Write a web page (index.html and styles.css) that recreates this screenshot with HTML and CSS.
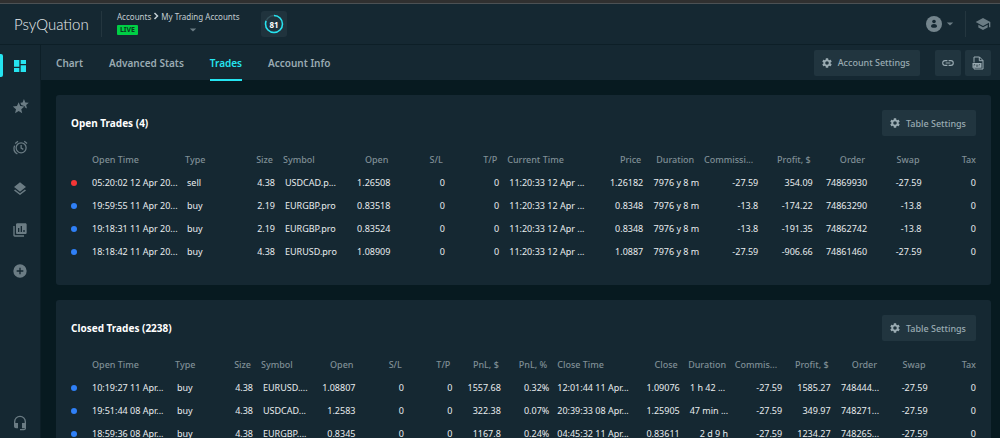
FILE: index.html
```html
<!DOCTYPE html>
<html lang="en">
<head>
    <meta charset="UTF-8">
    <meta name="viewport" content="width=device-width, initial-scale=1.0">
    <title>PsyQuation - Trades</title>
    <link rel="stylesheet" href="styles.css">
</head>
<body>
    <!-- shared icons -->
    <svg class="sprite" aria-hidden="true">
        <symbol id="gear" viewBox="0 0 24 24">
            <path d="M19.14 12.94c.04-.3.06-.61.06-.94 0-.32-.02-.64-.07-.94l2.03-1.58a.49.49 0 0 0 .12-.61l-1.92-3.32a.49.49 0 0 0-.59-.22l-2.39.96c-.5-.38-1.03-.7-1.62-.94l-.36-2.54A.48.48 0 0 0 13.920 2.400h-3.840c-.24 0-.43.17-.47.41l-.36 2.54c-.59.24-1.13.57-1.62.94l-2.390-.96c-.22-.08-.47 0-.59.22L2.740 8.870c-.12.21-.08.47.12.61l2.030 1.580c-.05.3-.09.63-.09.94s.02.64.07.94l-2.030 1.580a.49.49 0 0 0-.12.61l1.920 3.320c.12.22.37.29.59.22l2.390-.96c.5.38 1.030.7 1.620.94l.36 2.540c.05.24.24.41.48.41h3.840c.24 0 .44-.17.47-.41l.36-2.540c.59-.24 1.130-.56 1.620-.94l2.390.96c.22.08.47 0 .59-.22l1.920-3.320c.12-.22.07-.47-.12-.61l-2.010-1.580zM12 15.600A3.600 3.600 0 1 1 12 8.400a3.600 3.600 0 0 1 0 7.200z"/>
        </symbol>
        <symbol id="caret" viewBox="0 0 10 10">
            <path d="M1 3h8L5 7z"/>
        </symbol>
    </svg>

    <div class="topline"></div>

    <header class="header">
        <a href="#" class="logo">PsyQuation</a>
        <div class="account">
            <nav class="breadcrumb" aria-label="Breadcrumb">
                <a href="#">Accounts</a>
                <svg viewBox="0 0 8 10" class="chevron"><path d="M2 1l4 4-4 4"/></svg>
                <a href="#">My Trading Accounts</a>
            </nav>
            <div class="account-row">
                <span class="badge">LIVE</span>
                <button class="account-select" aria-label="Select account"><svg class="caret"><use href="#caret"/></svg></button>
            </div>
        </div>
        <div class="score">
            <svg viewBox="0 0 20 20">
                <circle cx="10" cy="10" r="8.500" class="ring"/>
                <circle cx="10" cy="10" r="8.500" class="ring-value" pathLength="100" stroke-dasharray="81 100" transform="rotate(-90 10 10)"/>
            </svg>
            <span>81</span>
        </div>
        <button class="user" aria-label="Profile">
            <svg viewBox="0 0 16 16" class="avatar"><circle cx="8" cy="8" r="8"/><circle cx="8" cy="5.500" r="1.800" class="hole"/><path d="M5 10.500c0-3.200 6-3.200 6 0 0 1.800-6 1.800-6 0z" class="hole"/></svg>
            <svg class="caret"><use href="#caret"/></svg>
        </button>
        <a href="#" class="academy" aria-label="Academy">
            <svg viewBox="0 0 24 24"><path d="M5 13.180v4L12 21l7-3.820v-4L12 17l-7-3.820zM12 3L1 9l11 6 9-4.910V17h2V9L12 3z"/></svg>
        </a>
    </header>

    <div class="app">
        <nav class="sidebar" aria-label="Main">
            <a href="#" class="active" aria-label="Dashboard"><svg viewBox="0 0 24 24"><path d="M3 13h8V3H3v10zm0 8h8v-6H3v6zm10 0h8V11h-8v10zm0-18v6h8V3h-8z"/></svg></a>
            <a href="#" aria-label="Ratings"><svg viewBox="0 0 24 24" class="wide"><path d="M9 5l2.600 6.200 6.700.600-5.100 4.400 1.500 6.600L9 19.300l-5.700 3.500 1.500-6.600L-.300 11.800l6.700-.600z"/><path d="M13.300 9.400l-1.500-3.600 3.500-.300L17.500 0l2.200 5.500 5.600.400-4.300 3.700 1.300 5.700-3.600-2.200.3-1.500-3.300-1.400z"/></svg></a>
            <a href="#" aria-label="Alerts"><svg viewBox="0 0 24 24" class="wide line"><circle cx="13" cy="12.500" r="8"/><path d="M13 8v5l3.500 2M3.500 5.500L8 2M18 2l4.500 3.500M2.500 9c-2 5-.5 10.500 4.500 13.500"/></svg></a>
            <a href="#" aria-label="Layers"><svg viewBox="0 0 24 24"><path d="M11.990 18.540l-7.370-5.730L3 14.070l9 7 9-7-1.630-1.270-7.380 5.740zM12 16l7.360-5.730L21 9l-9-7-9 7 1.630 1.270L12 16z"/></svg></a>
            <a href="#" aria-label="Reports"><svg viewBox="0 0 24 24"><path d="M4 6H2v14c0 1.100.9 2 2 2h14v-2H4V6z"/><path fill-rule="evenodd" d="M20 2H8c-1.100 0-2 .9-2 2v12c0 1.100.9 2 2 2h12c1.100 0 2-.9 2-2V4c0-1.100-.9-2-2-2zM9 9h2v6H9zM13 6h2v9h-2zM17 12h2v3h-2z"/></svg></a>
            <a href="#" aria-label="Add"><svg viewBox="0 0 24 24"><path d="M12 2a10 10 0 1 0 0 20 10 10 0 0 0 0-20zm5 11h-4v4h-2v-4H7v-2h4V7h2v4h4v2z"/></svg></a>
            <a href="#" class="support" aria-label="Support"><svg viewBox="0 0 24 24"><path d="M12 1a9 9 0 0 0-9 9v7c0 1.660 1.340 3 3 3h3v-8H5v-2a7 7 0 0 1 14 0v2h-4v8h4v1h-7v2h6c1.660 0 3-1.340 3-3V10a9 9 0 0 0-9-9z"/></svg></a>
        </nav>

        <div class="content">
            <div class="subheader">
                <nav class="tabs" aria-label="Account">
                    <a href="#">Chart</a>
                    <a href="#">Advanced Stats</a>
                    <a href="#" class="active">Trades</a>
                    <a href="#">Account Info</a>
                </nav>
                <button class="btn account-settings"><svg><use href="#gear"/></svg>Account Settings</button>
                <button class="btn icon-btn" aria-label="Copy link"><svg viewBox="0 0 24 24" class="link"><path d="M3.900 12c0-1.710 1.390-3.100 3.100-3.100h4V7H7a5 5 0 0 0 0 10h4v-1.900H7c-1.710 0-3.100-1.390-3.100-3.100zM8 13h8v-2H8v2zm9-6h-4v1.900h4a3.100 3.100 0 0 1 0 6.200h-4V17h4a5 5 0 0 0 0-10z"/></svg></button>
                <button class="btn icon-btn" aria-label="Export file"><svg viewBox="0 0 14 14" class="file"><path class="sheet" d="M3 6.500V1h5.500L12 4.500V13H3v-1M8.300 1v3.700H12"/><path d="M1.500 7h9v4.800h-9z"/><path class="marks" d="M3 10.500v-2h1v1M5.500 8.500v2h1v-2M8 10.500v-2h1"/></svg></button>
            </div>

            <main class="panels">
                <section class="card">
                    <div class="card-head">
                        <h2>Open Trades (4)</h2>
                        <button class="btn"><svg><use href="#gear"/></svg>Table Settings</button>
                    </div>
                    <table class="open-trades">
                        <colgroup>
                            <col class="c-dot"><col class="c-time"><col class="c-type"><col class="c-size"><col class="c-symbol"><col><col><col><col class="c-time2"><col class="c-price"><col class="c-price"><col class="c-comm"><col><col><col><col>
                        </colgroup>
                        <thead>
                            <tr><th></th><th class="text">Open Time</th><th class="text">Type</th><th>Size</th><th class="text">Symbol</th><th>Open</th><th>S/L</th><th>T/P</th><th class="text">Current Time</th><th>Price</th><th class="inset">Duration</th><th class="inset">Commissi...</th><th>Profit, $</th><th>Order</th><th>Swap</th><th>Tax</th></tr>
                        </thead>
                        <tbody>
                            <tr><td><i class="dot sell"></i></td><td class="text first">05:20:02 12 Apr 20...</td><td class="text">sell</td><td>4.38</td><td class="text">USDCAD.p...</td><td>1.26508</td><td>0</td><td>0</td><td class="text">11:20:33 12 Apr ...</td><td>1.26182</td><td>7976 y 8 m</td><td>-27.59</td><td>354.09</td><td>74869930</td><td>-27.59</td><td>0</td></tr>
                            <tr><td><i class="dot"></i></td><td class="text first">19:59:55 11 Apr 20...</td><td class="text">buy</td><td>2.19</td><td class="text">EURGBP.pro</td><td>0.83518</td><td>0</td><td>0</td><td class="text">11:20:33 12 Apr ...</td><td>0.8348</td><td>7976 y 8 m</td><td>-13.8</td><td>-174.22</td><td>74863290</td><td>-13.8</td><td>0</td></tr>
                            <tr><td><i class="dot"></i></td><td class="text first">19:18:31 11 Apr 20...</td><td class="text">buy</td><td>2.19</td><td class="text">EURGBP.pro</td><td>0.83524</td><td>0</td><td>0</td><td class="text">11:20:33 12 Apr ...</td><td>0.8348</td><td>7976 y 8 m</td><td>-13.8</td><td>-191.35</td><td>74862742</td><td>-13.8</td><td>0</td></tr>
                            <tr><td><i class="dot"></i></td><td class="text first">18:18:42 11 Apr 20...</td><td class="text">buy</td><td>4.38</td><td class="text">EURUSD.pro</td><td>1.08909</td><td>0</td><td>0</td><td class="text">11:20:33 12 Apr ...</td><td>1.0887</td><td>7976 y 8 m</td><td>-27.59</td><td>-906.66</td><td>74861460</td><td>-27.59</td><td>0</td></tr>
                        </tbody>
                    </table>
                </section>

                <section class="card">
                    <div class="card-head">
                        <h2>Closed Trades (2238)</h2>
                        <button class="btn"><svg><use href="#gear"/></svg>Table Settings</button>
                    </div>
                    <table class="closed-trades">
                        <colgroup>
                            <col class="c-dot"><col class="c-time"><col class="c-type"><col class="c-size"><col class="c-symbol"><col><col><col><col><col><col class="c-time2"><col><col><col class="c-comm"><col><col><col><col>
                        </colgroup>
                        <thead>
                            <tr><th></th><th class="text">Open Time</th><th class="text">Type</th><th>Size</th><th class="text">Symbol</th><th>Open</th><th>S/L</th><th>T/P</th><th>PnL, $</th><th>PnL, %</th><th class="text">Close Time</th><th>Close</th><th>Duration</th><th class="inset">Commis...</th><th>Profit, $</th><th>Order</th><th>Swap</th><th>Tax</th></tr>
                        </thead>
                        <tbody>
                            <tr><td><i class="dot"></i></td><td class="text first">10:19:27 11 Apr...</td><td class="text">buy</td><td>4.38</td><td class="text">EURUSD....</td><td>1.08807</td><td>0</td><td>0</td><td>1557.68</td><td>0.32%</td><td class="text first">12:01:44 11 Apr...</td><td>1.09076</td><td class="cut">1 h 42 ...</td><td>-27.59</td><td>1585.27</td><td>748444...</td><td>-27.59</td><td>0</td></tr>
                            <tr><td><i class="dot"></i></td><td class="text first">19:51:44 08 Apr...</td><td class="text">buy</td><td>4.38</td><td class="text">USDCAD...</td><td>1.2583</td><td>0</td><td>0</td><td>322.38</td><td>0.07%</td><td class="text first">20:39:33 08 Apr...</td><td>1.25905</td><td>47 min ...</td><td>-27.59</td><td>349.97</td><td>748271...</td><td>-27.59</td><td>0</td></tr>
                            <tr><td><i class="dot"></i></td><td class="text first">18:59:36 08 Apr...</td><td class="text">buy</td><td>4.38</td><td class="text">EURGBP....</td><td>0.8345</td><td>0</td><td>0</td><td>1167.8</td><td>0.24%</td><td class="text first">04:45:32 11 Apr...</td><td>0.83611</td><td>2 d 9 h</td><td>-27.59</td><td>1234.27</td><td>748265...</td><td>-27.59</td><td>0</td></tr>
                        </tbody>
                    </table>
                </section>
            </main>
        </div>
    </div>
</body>
</html>
```

FILE: styles.css
```css
:root {
    --panel: #152832;
    --back: #071a20;
    --button: #21353f;
    --line: #0d1f27;
    --accent: #25e4f0;
    --muted: #6b7c84;
    --soft: #9aabb2;
}

* {
    box-sizing: border-box;
}

body {
    display: flex;
    flex-direction: column;
    height: 100vh;
    margin: 0;
    overflow: hidden;
    background: var(--back);
    color: #e8ecee;
    font-family: "Noto Sans", sans-serif;
    font-size: 9px;
}

a {
    color: inherit;
    text-decoration: none;
}

button {
    border: 0;
    padding: 0;
    background: none;
    color: inherit;
    font: inherit;
    cursor: pointer;
}

svg {
    display: block;
    fill: currentColor;
}

.sprite {
    display: none;
}

.topline {
    flex: none;
    height: 4px;
    background: #303030;
    border-bottom: 1px solid #4c5154;
}

/* header */
.header {
    display: flex;
    flex: none;
    align-items: center;
    height: 41px;
    padding-left: 14px;
    background: var(--panel);
    border-bottom: 1px solid var(--line);
}

.logo {
    width: 87px;
    color: #e8edef;
    font-family: Lato, "Noto Sans", sans-serif;
    font-size: 15px;
    font-weight: 300;
}

.account {
    width: 160px;
    height: 26px;
    padding-left: 15px;
    border-left: 1px solid #24363f;
}

.breadcrumb {
    display: flex;
    align-items: center;
    height: 10px;
    gap: 2px;
    color: #c3cdd1;
    font-size: 8px;
    white-space: nowrap;
}

.chevron {
    width: 6px;
    height: 8px;
    fill: none;
    stroke: currentColor;
    stroke-width: 2;
}

.account-row {
    display: flex;
    justify-content: space-between;
    width: 80px;
    margin-top: 4px;
}

.badge {
    width: 21px;
    height: 10px;
    border-radius: 1px;
    background: #00cf45;
    color: #0b3a22;
    font-size: 7px;
    font-weight: 700;
    line-height: 10px;
    text-align: center;
}

.caret {
    width: 8px;
    height: 8px;
    color: var(--muted);
}

.score {
    display: grid;
    place-items: center;
    width: 26px;
    height: 26px;
    border-radius: 3px;
    background: #20333d;
    color: #fff;
    font-size: 8px;
    font-weight: 700;
}

.score svg,
.score span {
    grid-area: 1 / 1;
}

.score svg {
    width: 20px;
    height: 20px;
    fill: none;
    stroke-width: 1.5;
}

.ring {
    stroke: #35505a;
}

.ring-value {
    stroke: var(--accent);
}

.user {
    display: flex;
    align-items: center;
    gap: 4px;
    height: 26px;
    margin-left: auto;
    padding-right: 11px;
    border-right: 1px solid #24363f;
    color: #74858d;
}

.avatar {
    width: 16px;
    height: 16px;
}

.hole {
    fill: var(--panel);
}

.academy {
    padding: 0 9px;
    color: var(--muted);
}

.academy svg {
    width: 16px;
    height: 16px;
}

/* layout */
.app {
    display: flex;
    flex: 1;
    min-height: 0;
}

.sidebar {
    display: flex;
    flex: none;
    flex-direction: column;
    width: 41px;
    background: var(--panel);
    border-right: 1px solid var(--line);
    color: var(--muted);
}

.sidebar a {
    display: flex;
    align-items: center;
    justify-content: center;
    height: 41px;
}

.sidebar svg {
    width: 16px;
    height: 16px;
    overflow: visible;
}

.sidebar .wide {
    width: 15px;
    height: 15px;
}

.sidebar .line {
    fill: none;
    stroke: currentColor;
    stroke-width: 2;
}

.sidebar .active {
    color: var(--accent);
}

.sidebar .active::before {
    content: "";
    width: 3px;
    height: 23px;
    margin-right: auto;
    border-radius: 0 2px 2px 0;
    background: var(--accent);
}

.sidebar .active svg {
    margin-right: 12px;
}

.sidebar .support {
    margin-top: auto;
    height: 30px;
}

.content {
    display: flex;
    flex: 1;
    flex-direction: column;
    min-width: 0;
}

.subheader {
    display: flex;
    flex: none;
    align-items: center;
    height: 35px;
    padding: 0 9px 0 15px;
    background: var(--panel);
}

.tabs {
    display: flex;
    gap: 26px;
    margin-right: auto;
    color: var(--soft);
    font-size: 10px;
    font-weight: 600;
    line-height: 36px;
}

.tabs .active {
    color: var(--accent);
    box-shadow: inset 0 -2px var(--accent);
}

.btn {
    display: flex;
    align-items: center;
    height: 26px;
    gap: 5px;
    padding: 0 10px 0 7px;
    border-radius: 2px;
    background: var(--button);
    color: var(--soft);
    font-weight: 500;
}

.btn svg {
    width: 12px;
    height: 12px;
}

.account-settings {
    margin-right: 15px;
}

.icon-btn {
    justify-content: center;
    width: 26px;
    padding: 0;
}

.icon-btn + .icon-btn {
    margin-left: 4px;
}

.btn .link,
.btn .file {
    width: 14px;
    height: 14px;
}

.file .sheet,
.file .marks {
    fill: none;
    stroke: currentColor;
}

.file .marks {
    stroke: var(--button);
    stroke-width: 0.5;
}

/* trade tables */
.panels {
    flex: 1;
    min-height: 0;
    padding: 15px 9px 0 15px;
    overflow: hidden;
}

.card {
    margin-bottom: 15px;
    padding: 15px 15px 22px;
    border-radius: 3px;
    background: var(--panel);
}

.card-head {
    display: flex;
    align-items: center;
    justify-content: space-between;
    margin-bottom: 12px;
}

h2 {
    margin: 0;
    color: #fff;
    font-size: 10px;
    font-weight: 700;
}

table {
    width: 100%;
    border-collapse: collapse;
    table-layout: fixed;
}

th,
td {
    height: 23px;
    padding: 0;
    text-align: right;
    white-space: nowrap;
}

th {
    padding-right: 2px;
    color: #7f8e95;
    font-weight: 500;
}

th:last-child {
    padding-right: 0;
}

th.inset {
    padding-right: 5px;
}

th.text {
    padding-left: 8px;
    text-align: left;
}

td.text {
    padding-left: 10px;
    text-align: left;
}

td.first {
    padding-left: 8px;
}

td.cut {
    padding-right: 3px;
}

.dot {
    display: block;
    width: 6px;
    height: 6px;
    border-radius: 50%;
    background: #2f80f7;
}

.dot.sell {
    background: #f53636;
}

.c-dot {
    width: 13px;
}

.open-trades .c-time {
    width: 93px;
}

.open-trades .c-type {
    width: 53px;
}

.open-trades .c-size {
    width: 45px;
}

.open-trades .c-symbol {
    width: 61px;
}

.open-trades .c-time2 {
    width: 88px;
}

.open-trades .c-price {
    width: 56px;
}

.open-trades .c-comm {
    width: 59px;
}

.closed-trades .c-time {
    width: 83px;
}

.closed-trades .c-type {
    width: 48px;
}

.closed-trades .c-size {
    width: 38px;
}

.closed-trades .c-symbol {
    width: 54px;
}

.closed-trades .c-time2 {
    width: 82px;
}

.closed-trades .c-comm {
    width: 54px;
}
```
